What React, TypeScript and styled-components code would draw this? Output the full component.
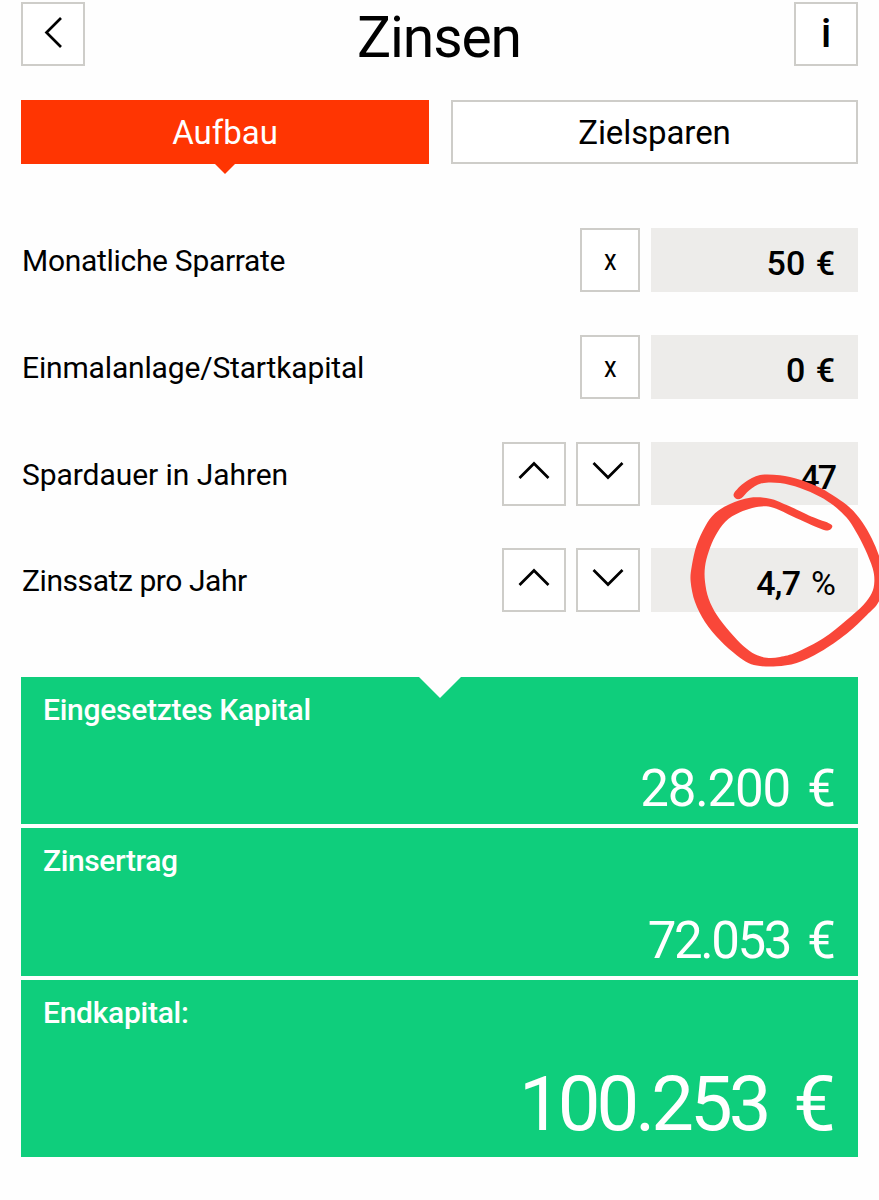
import React from 'react';
import styled, { createGlobalStyle, css } from 'styled-components';

const BORDER = '#cecdc9';
const RED = '#ff3502';
const GREEN = '#0fce7c';

const GlobalStyle = createGlobalStyle`
  * { box-sizing: border-box; }
  body {
    margin: 0;
    background: #fefefe;
    color: #000;
    font-family: Roboto, "Liberation Sans", sans-serif;
  }
`;

const Page = styled.main`
  position: relative;
  width: 879px;
  height: 1200px;
  padding: 2px 21px 0;
  overflow: hidden;
`;

/* Text run with per-use tracking; the negative margin drops the trailing track. */
const Text = styled.span<{ $track?: number; $word?: number }>`
  letter-spacing: ${({ $track = 0 }) => $track}px;
  margin-right: ${({ $track = 0 }) => -$track}px;
  word-spacing: ${({ $word = 0 }) => $word}px;
  white-space: pre;
`;

const Header = styled.header`
  display: flex;
  justify-content: space-between;
  height: 64px;
`;

const Title = styled.h1`
  margin: 0;
  padding-top: 4px;
  font-size: 57px;
  line-height: 64px;
  font-weight: 400;
`;

const Button = styled.button<{ $width?: number }>`
  display: flex;
  align-items: center;
  justify-content: center;
  width: ${({ $width = 64 }) => $width}px;
  height: 64px;
  padding: 0 0 5px;
  border: 2px solid ${BORDER};
  background: #fff;
  color: #000;
  font: 400 30px/1 Roboto, "Liberation Sans", sans-serif;
`;

const InfoMark = styled.span`
  font-size: 40px;
  font-weight: 500;
  line-height: 50px;
  transform: translateY(2px);
`;

const CloseMark = styled.span`
  padding-top: 5px;
  transform: scaleX(0.85);
`;

const Tabs = styled.nav`
  display: grid;
  grid-template-columns: 408px 407px;
  gap: 22px;
  margin-top: 34px;
`;

const Tab = styled.button<{ $active?: boolean }>`
  position: relative;
  display: flex;
  align-items: center;
  justify-content: center;
  height: 64px;
  padding: 0;
  border: 2px solid ${BORDER};
  background: #fff;
  color: #000;
  font: 400 33px/1 Roboto, "Liberation Sans", sans-serif;
  ${({ $active }) =>
    $active &&
    css`
      border-color: ${RED};
      background: ${RED};
      color: #fff;
      &::after {
        content: '';
        position: absolute;
        top: 61px;
        left: 191px;
        border: solid transparent;
        border-width: 11px 11px 0;
        border-top-color: ${RED};
      }
    `}
`;

const Form = styled.section`
  display: flex;
  flex-direction: column;
  gap: 43px;
  margin-top: 64px;
`;

const Row = styled.div`
  display: flex;
  height: 63.8px;
`;

const Label = styled.label`
  flex: 1;
  padding-left: 1px;
  font-size: 30px;
  line-height: 65px;
`;

const Controls = styled.div`
  display: flex;
  gap: 10px;
  margin-right: 11px;
`;

const Value = styled.output<{ $inset: number }>`
  width: 207px;
  padding-right: ${({ $inset }) => $inset}px;
  background: #edecea;
  font-size: 34px;
  font-weight: 500;
  line-height: 70px;
  text-align: right;
`;

const Percent = styled.span`
  font-weight: 400;
`;

const Results = styled.section`
  position: relative;
  display: grid;
  grid-template-rows: 147px 148px 177px;
  gap: 4px;
  margin-top: 65px;
  color: #fff;
  &::before {
    content: '';
    position: absolute;
    top: -1px;
    left: 397px;
    border: solid transparent;
    border-width: 22px 22px 0;
    border-top-color: #fefefe;
  }
`;

const Card = styled.article`
  display: flex;
  flex-direction: column;
  justify-content: space-between;
  padding: 15px 22px 5px;
  background: ${GREEN};
`;

const CardTitle = styled.h2`
  margin: 0;
  font-size: 30px;
  line-height: 36px;
  font-weight: 500;
`;

const Amount = styled.div<{ $large?: boolean }>`
  align-self: flex-end;
  font-size: ${({ $large }) => ($large ? 76 : 51)}px;
  line-height: ${({ $large }) => ($large ? 95 : 61)}px;
  font-weight: 400;
`;

const Marker = styled.svg`
  position: absolute;
  left: 480px;
  top: 430px;
  width: 399px;
  height: 270px;
  pointer-events: none;
`;

const chevrons = {
  left: { d: 'M24 2 9.5 16.5 24 31', shift: 'none' },
  up: { d: 'M1.5 23 16 8.5 30.5 23', shift: 'none' },
  down: { d: 'M1.5 8.5 16 23 30.5 8.5', shift: 'translateY(-0.5px)' },
};

const ChevronSvg = styled.svg<{ $shift: string }>`
  flex: none;
  width: 32px;
  height: 32px;
  fill: none;
  stroke: #000;
  stroke-width: 2.7;
  transform: ${({ $shift }) => $shift};
`;

function Chevron({ dir }: { dir: keyof typeof chevrons }) {
  return (
    <ChevronSvg viewBox="0 0 32 32" $shift={chevrons[dir].shift}>
      <path d={chevrons[dir].d} />
    </ChevronSvg>
  );
}

/* Outline of the hand-drawn red circle, listed point by point. */
const outline: [number, number][] = [
  [762, 190], [795, 157], [840, 135], [900, 136], [960, 149], [1020, 173], [1070, 203],
  [1110, 233], [1146, 275], [1175, 325], [1198, 380], [1215, 440], [1198, 512], [1160, 556],
  [1100, 611], [1020, 666], [950, 699], [890, 709], [840, 708], [805, 699], [770, 676],
  [720, 631], [675, 576], [645, 516], [632, 455], [635, 410], [650, 345], [675, 290],
  [705, 250], [750, 222], [810, 203], [870, 206], [920, 225], [1000, 262], [1045, 279],
  [1057, 289], [1046, 301], [1022, 296], [940, 260], [880, 233], [835, 230], [780, 247],
  [736, 275], [706, 318], [686, 365], [675, 410], [675, 455], [686, 506], [711, 556],
  [750, 606], [790, 648], [825, 673], [860, 683], [900, 681], [950, 667], [1030, 625],
  [1100, 570], [1150, 525], [1175, 490], [1183, 455], [1178, 415], [1155, 357], [1128, 305],
  [1099, 262], [1060, 226], [1020, 200], [960, 174], [900, 159], [845, 160], [808, 181],
  [785, 204], [768, 206],
];

function smoothClosed(points: [number, number][]) {
  const n = points.length;
  const at = (i: number) => points[(i + n) % n];
  let d = `M${points[0].join(' ')}`;
  for (let i = 0; i < n; i++) {
    const [a, b, c, e] = [at(i - 1), at(i), at(i + 1), at(i + 2)];
    d += `C${b[0] + (c[0] - a[0]) / 6} ${b[1] + (c[1] - a[1]) / 6} ${c[0] - (e[0] - b[0]) / 6} ${c[1] - (e[1] - b[1]) / 6} ${c[0]} ${c[1]}`;
  }
  return d + 'Z';
}

export default function App() {
  return (
    <Page>
      <GlobalStyle />
      <Header>
        <Button aria-label="Zurück"><Chevron dir="left" /></Button>
        <Title><Text $track={-1.1}>Zinsen</Text></Title>
        <Button><InfoMark>i</InfoMark></Button>
      </Header>
      <Tabs>
        <Tab $active><Text>Aufbau</Text></Tab>
        <Tab><Text $track={-0.1}>Zielsparen</Text></Tab>
      </Tabs>
      <Form>
        <Row>
          <Label><Text $track={-0.3}>Monatliche Sparrate</Text></Label>
          <Controls><Button $width={60}><CloseMark>x</CloseMark></Button></Controls>
          <Value $inset={23}><Text $word={2}>50 €</Text></Value>
        </Row>
        <Row>
          <Label><Text $track={-0.16}>Einmalanlage/Startkapital</Text></Label>
          <Controls><Button $width={60}><CloseMark>x</CloseMark></Button></Controls>
          <Value $inset={23}><Text $word={2}>0 €</Text></Value>
        </Row>
        <Row>
          <Label><Text $track={-0.06}>Spardauer in Jahren</Text></Label>
          <Controls>
            <Button><Chevron dir="up" /></Button>
            <Button><Chevron dir="down" /></Button>
          </Controls>
          <Value $inset={21}><Text $track={-2}>47</Text></Value>
        </Row>
        <Row>
          <Label><Text $track={-0.43}>Zinssatz pro Jahr</Text></Label>
          <Controls>
            <Button><Chevron dir="up" /></Button>
            <Button><Chevron dir="down" /></Button>
          </Controls>
          <Value $inset={22}><Text $track={-0.7} $word={3}>4,7 <Percent>%</Percent></Text></Value>
        </Row>
      </Form>
      <Results>
        <Card>
          <CardTitle><Text $track={-0.28}>Eingesetztes Kapital</Text></CardTitle>
          <Amount><Text $track={-1.2} $word={6}>28.200 €</Text></Amount>
        </Card>
        <Card>
          <CardTitle><Text $track={-0.4}>Zinsertrag</Text></CardTitle>
          <Amount><Text $track={-2.4} $word={7}>72.053 €</Text></Amount>
        </Card>
        <Card>
          <CardTitle><Text $track={-0.28}>Endkapital:</Text></CardTitle>
          <Amount $large><Text $track={-4} $word={11}>100.253 €</Text></Amount>
        </Card>
      </Results>
      <Marker viewBox="0 0 1197 810">
        <path d={smoothClosed(outline)} fill="#f94739" />
      </Marker>
    </Page>
  );
}
